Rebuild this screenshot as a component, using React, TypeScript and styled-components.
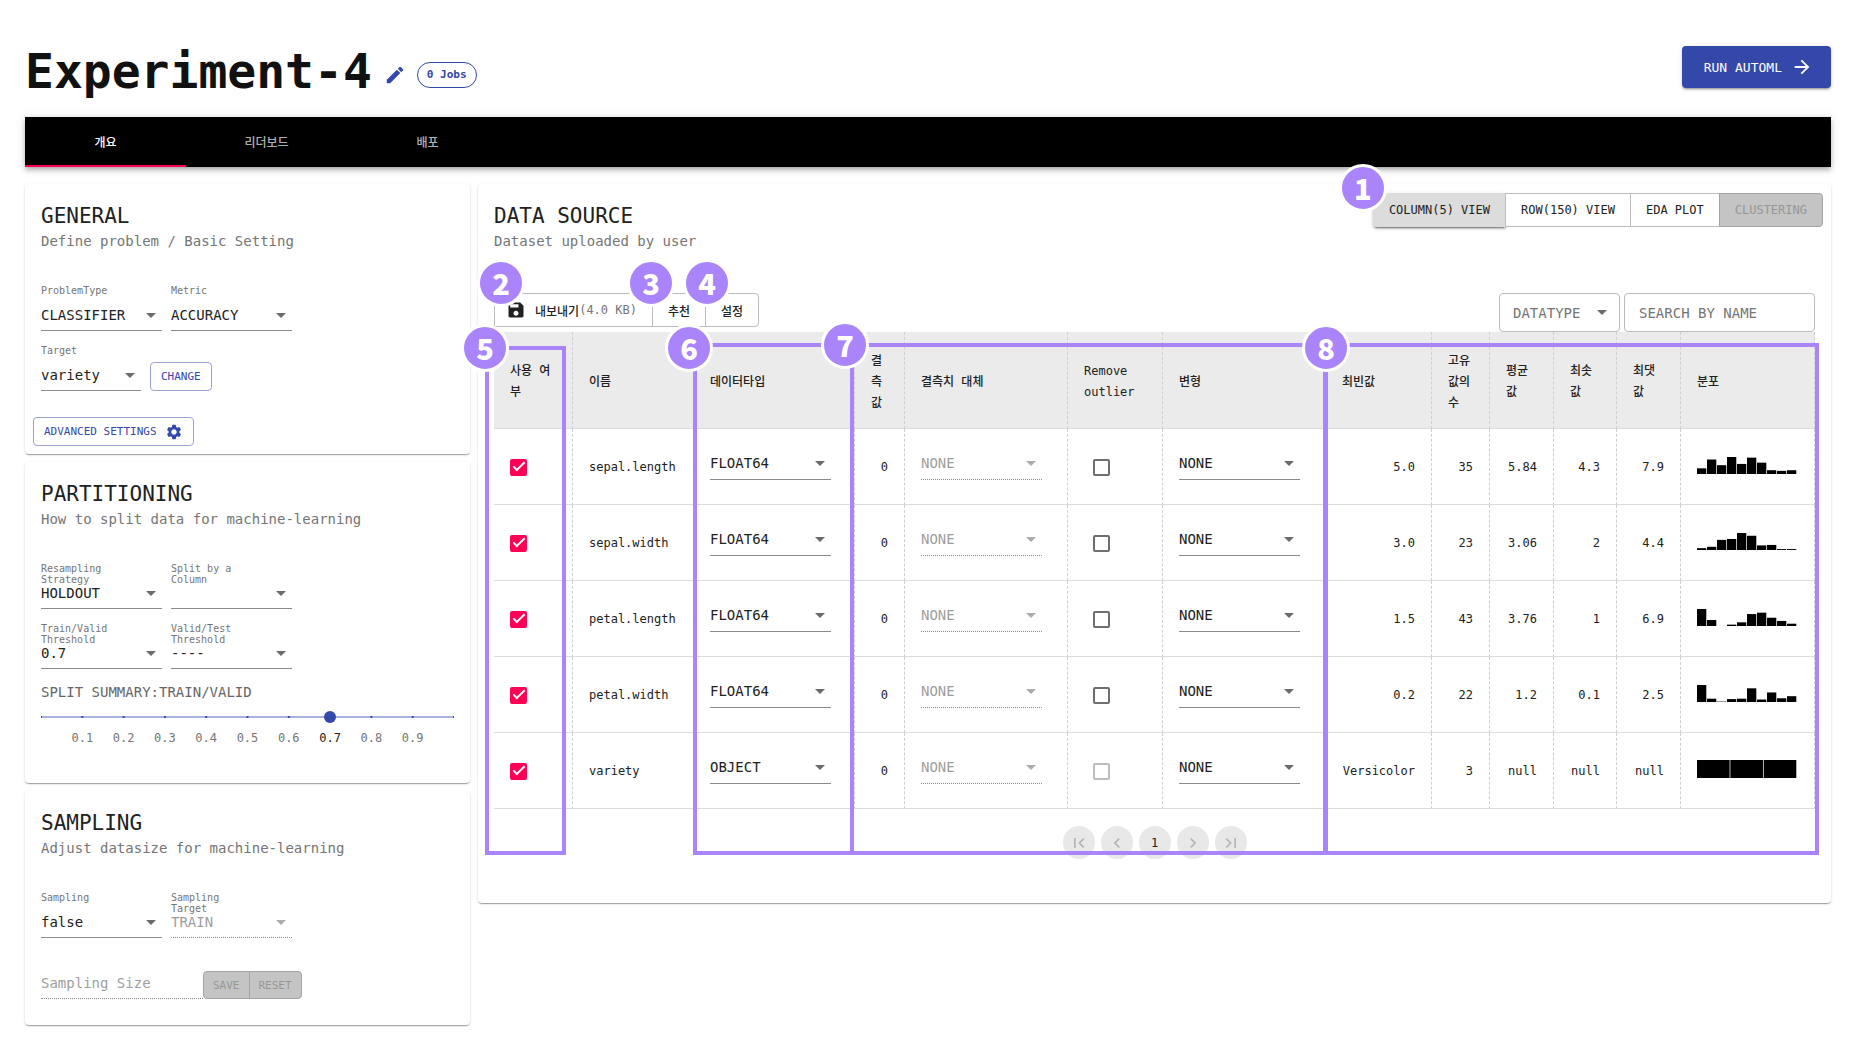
import React, { useId, useState } from "react";
import styled, { createGlobalStyle, css } from "styled-components";

const mono = `"DejaVu Sans Mono", "Liberation Mono", "Noto Sans CJK KR", monospace`;
const hangul = `"DejaVu Sans Mono", "Noto Sans CJK KR", sans-serif`;
const indigo = "#3448a9";
const violet = "#a984fb";
const pink = "#ff0054";
const ink = "#212121";
const muted = "#757575";
const faded = "#9e9e9e";

const Global = createGlobalStyle`
  *, *::before, *::after { box-sizing: border-box; }
  body { margin: 0; background: #fff; color: ${ink}; font-family: ${mono}; font-size: 14px; }
  button, input, select { font-family: inherit; margin: 0; }
`;

/* ---------- shell ---------- */

const Page = styled.main`
  padding: 37px 40px 15px 25px;
`;

const Header = styled.header`
  display: flex;
  align-items: center;
  height: 80px;
  padding-bottom: 12px;
`;

const Title = styled.h1`
  margin: 0;
  font-size: 48px;
  line-height: 68px;
  font-weight: 700;
  color: #111;
`;

const IconButton = styled.button`
  display: flex;
  margin: 8px 11px 0 12px;
  padding: 0;
  border: 0;
  background: none;
  color: ${indigo};
`;

const JobsChip = styled.span`
  height: 26px;
  margin-top: 8px;
  padding: 0 9px;
  border: 1px solid ${indigo};
  border-radius: 13px;
  color: ${indigo};
  font-size: 11px;
  line-height: 24px;
  font-weight: 700;
`;

const RunButton = styled.button`
  display: flex;
  align-items: center;
  gap: 9px;
  height: 42px;
  margin: 0 0 8px auto;
  padding: 0 18px 0 22px;
  border: 0;
  border-radius: 4px;
  background: ${indigo};
  color: #fff;
  font-size: 13px;
  box-shadow: 0 3px 1px -2px rgba(0, 0, 0, 0.2), 0 2px 2px rgba(0, 0, 0, 0.14), 0 1px 5px rgba(0, 0, 0, 0.12);
`;

const TabBar = styled.nav`
  display: flex;
  height: 50px;
  background: #000;
  box-shadow: 0 2px 4px -1px rgba(0, 0, 0, 0.2), 0 4px 5px rgba(0, 0, 0, 0.14), 0 1px 10px rgba(0, 0, 0, 0.12);
`;

const Tab = styled.button<{ $active?: boolean }>`
  width: 161px;
  padding: 0;
  border: 0;
  border-bottom: 2px solid ${(p) => (p.$active ? pink : "transparent")};
  background: none;
  color: ${(p) => (p.$active ? "#fff" : "rgba(255,255,255,.7)")};
  font-family: ${hangul};
  font-size: 12px;
  font-weight: 500;
`;

const Columns = styled.div`
  display: grid;
  grid-template-columns: minmax(0, 445fr) minmax(0, 1353fr);
  gap: 8px;
  align-items: start;
  margin-top: 17px;
`;

const Stack = styled.div`
  display: flex;
  flex-direction: column;
  gap: 8px;
`;

const Card = styled.section<{ $bottom: number }>`
  padding: 16px 16px ${(p) => p.$bottom}px;
  border-radius: 4px;
  background: #fff;
  box-shadow: 0 2px 1px -1px rgba(0, 0, 0, 0.2), 0 1px 1px rgba(0, 0, 0, 0.14), 0 1px 3px rgba(0, 0, 0, 0.12);
`;

const CardTitle = styled.h2`
  margin: 0;
  font-size: 21px;
  line-height: 32px;
  font-weight: 400;
`;

const CardText = styled.p`
  margin: 0;
  font-size: 14px;
  line-height: 18px;
  color: ${muted};
`;

/* ---------- form parts ---------- */

const Rows = styled.div`
  display: flex;
  flex-direction: column;
  gap: 14px;
  margin-top: 35px;
`;

const FieldRow = styled.div`
  display: flex;
  align-items: flex-end;
  gap: 9px;
`;

const FieldBox = styled.div<{ $width: number }>`
  width: ${(p) => p.$width}px;
`;

const FieldLabel = styled.label`
  display: block;
  width: 88px;
  height: 22px;
  font-size: 10px;
  line-height: 11px;
  color: ${muted};
`;

const SelectShell = styled.span<{ $off?: boolean }>`
  display: grid;
  align-items: center;
  width: 100%;
  height: 24px;
  padding-bottom: 7px;
  border-bottom: 1px ${(p) => (p.$off ? "dotted" : "solid")} #8a8a8a;
  color: ${(p) => (p.$off ? faded : ink)};

  &::after {
    content: "";
    grid-area: 1 / 1;
    justify-self: end;
    margin-right: 6px;
    border: 5px solid transparent;
    border-top-color: ${(p) => (p.$off ? "#ababab" : "#6b6b6b")};
    border-bottom-width: 0;
    pointer-events: none;
  }
`;

const NativeSelect = styled.select`
  grid-area: 1 / 1;
  width: 100%;
  height: 16px;
  padding: 0;
  border: 0;
  outline: 0;
  appearance: none;
  background: none;
  color: inherit;
  font-size: 14px;
  line-height: 16px;
  opacity: 1;
`;

const CellSelectShell = styled(SelectShell)`
  width: 121px;
  height: 26px;
`;

const OutlineButton = styled.button`
  display: inline-flex;
  align-items: center;
  gap: 8px;
  height: 29px;
  padding: 0 10px;
  border: 1px solid #9aa3d4;
  border-radius: 4px;
  background: #fff;
  color: ${indigo};
  font-size: 11px;
`;

const AdvancedRow = styled.div`
  display: flex;
  margin: 26px 0 0 -8px;
`;

const SplitLabel = styled.label`
  display: block;
  margin-top: 13px;
  font-size: 14px;
  line-height: 20px;
  color: #666;
`;

const Track = styled.div`
  height: 20px;
  margin-top: 5px;
  background: linear-gradient(90deg, transparent calc(100% - 2px), ${indigo} 0) 1px 9px / 10% 2px repeat-x,
    linear-gradient(#aab1dc, #aab1dc) 0 9px / 100% 2px no-repeat;
`;

const Range = styled.input`
  display: block;
  width: calc(100% + 12px);
  height: 20px;
  margin: 0 -6px;
  appearance: none;
  background: none;

  &::-webkit-slider-thumb {
    appearance: none;
    width: 12px;
    height: 12px;
    border-radius: 50%;
    background: ${indigo};
  }
`;

const Marks = styled.div`
  display: flex;
  padding: 0 5%;
  margin-top: 1px;
`;

const Mark = styled.span<{ $on: boolean }>`
  flex: 1;
  text-align: center;
  font-size: 12px;
  line-height: 20px;
  color: ${(p) => (p.$on ? ink : muted)};
`;

const SizeRow = styled.div`
  display: flex;
  margin-top: 33px;
`;

const SizeInput = styled.input`
  width: 162px;
  height: 28px;
  padding: 0 0 3px;
  border: 0;
  border-bottom: 1px dotted #8a8a8a;
  background: none;
  font-size: 14px;
  &::placeholder { color: ${faded}; opacity: 1; }
`;

/* ---------- button groups ---------- */

const Group = styled.div`
  position: relative;
  display: flex;
`;

const GroupButton = styled.button<{ $selected?: boolean; $small?: boolean }>`
  position: relative;
  display: flex;
  align-items: center;
  height: ${(p) => (p.$small ? 28 : 34)}px;
  padding: 0 ${(p) => (p.$small ? 9 : 15)}px;
  border: 1px solid #bcbcbc;
  background: #fff;
  color: ${ink};
  font-size: ${(p) => (p.$small ? 11 : 12)}px;

  & + & { margin-left: -1px; }
  &:first-of-type { border-radius: 4px 0 0 4px; }
  &:last-of-type { border-radius: 0 4px 4px 0; }

  &:disabled {
    border-color: #a3a3a3;
    background: #c4c4c4;
    color: #979797;
  }

  ${(p) =>
    p.$selected &&
    css`
      border-color: #dcdcdc #a8a8a8 #dcdcdc #dcdcdc;
      background: #dcdcdc;
      box-shadow: 0 3px 1px -2px rgba(0, 0, 0, 0.3), 0 2px 2px rgba(0, 0, 0, 0.2), 0 1px 5px rgba(0, 0, 0, 0.12);
    `}
`;

const Hangul = styled.span`
  font-family: ${hangul};
  font-size: 12px;
  font-weight: 500;
`;

const SizeNote = styled.span`
  color: ${muted};
`;

const SaveSlot = styled.span`
  display: flex;
  margin: 0 9px 0 -4px;
`;

/* ---------- data card ---------- */

const DataHead = styled.div`
  display: flex;
  justify-content: space-between;
  align-items: flex-start;
  height: 93px;
`;

const ViewSwitch = styled(Group)`
  margin: -7px -8px 0 0;
`;

const Toolbar = styled.div`
  display: flex;
  justify-content: space-between;
  align-items: flex-start;
  height: 39px;
`;

const Filters = styled.div`
  display: flex;
  gap: 4px;
`;

const TypeFilter = styled.span`
  display: grid;
  align-items: center;
  width: 121px;
  height: 39px;
  border: 1px solid #bcbcbc;
  border-radius: 4px;
  color: ${muted};

  ${NativeSelect} {
    height: 36px;
    padding-left: 13px;
  }

  &::after {
    content: "";
    grid-area: 1 / 1;
    justify-self: end;
    margin-right: 12px;
    border: 5px solid transparent;
    border-top-color: #6b6b6b;
    border-bottom-width: 0;
    pointer-events: none;
  }
`;

const Search = styled.input`
  width: 191px;
  height: 39px;
  padding: 0 14px;
  border: 1px solid #bcbcbc;
  border-radius: 4px;
  font-size: 14px;
  &::placeholder { color: ${muted}; opacity: 1; }
`;

const TableArea = styled.div`
  position: relative;
`;

const Table = styled.table`
  width: 100%;
  table-layout: fixed;
  border-collapse: separate;
  border-spacing: 0;
`;

const Th = styled.th<{ $latin?: boolean }>`
  height: 97px;
  padding: 4px 16px 0;
  border-right: 1px dashed #cfcfcf;
  border-bottom: 1px solid #dcdcdc;
  background: #ebebeb;
  text-align: left;
  word-break: ${(p) => (p.$latin ? "normal" : "break-all")};
  font-family: ${(p) => (p.$latin ? mono : hangul)};
  font-size: 12px;
  line-height: 21px;
  font-weight: 500;
`;

const Td = styled.td<{ $num?: boolean; $inset?: boolean }>`
  height: 76px;
  padding: 1px 16px 0 ${(p) => (p.$inset ? 25 : 16)}px;
  border-right: 1px dashed #cfcfcf;
  border-bottom: 1px solid #dcdcdc;
  font-size: 12px;
  line-height: 20px;
  text-align: ${(p) => (p.$num ? "right" : "left")};
  white-space: nowrap;
`;

const Check = styled.input`
  display: grid;
  place-items: center;
  width: 17px;
  height: 17px;
  appearance: none;
  border: 2px solid #6e6e6e;
  border-radius: 2px;
  background: #fff;

  &:checked {
    border-color: ${pink};
    background: ${pink};
  }
  &:checked::before {
    content: "";
    width: 12px;
    height: 6px;
    border: solid #fff;
    border-width: 0 0 2px 2px;
    transform: translateY(-2px) rotate(-45deg);
  }
  &:disabled { border-color: #bdbdbd; }
`;

const Histogram = styled.svg`
  display: block;
  width: 100px;
  height: 18px;
  margin-bottom: 4px;
`;

const Pager = styled.nav`
  display: flex;
  justify-content: center;
  gap: 6px;
  margin-top: 17px;
`;

const PageButton = styled.button`
  display: flex;
  align-items: center;
  justify-content: center;
  width: 32px;
  height: 33px;
  padding: 0;
  border: 0;
  border-radius: 50%;
  background: #e8e8e8;
  color: ${ink};
  font-size: 12px;
  &:disabled { color: #b5b5b5; }
`;

/* ---------- annotations ---------- */

const Badge = styled.span<{ $x: number; $y: number }>`
  position: absolute;
  z-index: 3;
  left: ${(p) => p.$x}px;
  top: ${(p) => p.$y}px;
  width: 48px;
  height: 48px;
  margin: -24px 0 0 -24px;
  border: 3px solid #fff;
  border-radius: 50%;
  background: ${violet};
  color: #fff;
  font-family: "Noto Sans CJK KR", sans-serif;
  font-size: 29px;
  line-height: 41px;
  font-weight: 900;
  text-align: center;
`;

const FrameLayer = styled.div<{ $columns: string }>`
  position: absolute;
  inset: 11px 0 -46px;
  display: grid;
  grid-template-columns: ${(p) => p.$columns};
  pointer-events: none;
`;

const Frame = styled.div<{ $from: number; $to: number; $margin: string }>`
  position: relative;
  grid-row: 1;
  grid-column: ${(p) => p.$from} / ${(p) => p.$to};
  margin: ${(p) => p.$margin};
  border: 4px solid ${violet};
`;

const Anchor = styled.span`
  position: relative;
  display: flex;
  & + & { margin-left: -1px; }
  &:not(:last-of-type) ${GroupButton} { border-top-right-radius: 0; border-bottom-right-radius: 0; }
  &:not(:first-of-type) ${GroupButton} { border-top-left-radius: 0; border-bottom-left-radius: 0; }
`;

/* ---------- icons ---------- */

const Icon = ({ d, size }: { d: string; size: number }) => (
  <svg width={size} height={size} viewBox="0 0 24 24" fill="currentColor" aria-hidden="true">
    <path d={d} />
  </svg>
);

const icons = {
  edit: "M3 17.25V21h3.75L17.81 9.94l-3.75-3.75L3 17.25zM20.71 7.04a1 1 0 0 0 0-1.41l-2.34-2.34a1 1 0 0 0-1.41 0l-1.83 1.83 3.75 3.75 1.83-1.83z",
  arrow: "M12 4l-1.41 1.41L16.17 11H4v2h12.17l-5.58 5.59L12 20l8-8z",
  gear: "M19.14 12.94c.04-.3.06-.61.06-.94 0-.32-.02-.64-.07-.94l2.03-1.58a.49.49 0 0 0 .12-.61l-1.92-3.32a.488.488 0 0 0-.59-.22l-2.39.96c-.5-.38-1.03-.7-1.62-.94l-.36-2.54a.484.484 0 0 0-.48-.41h-3.84c-.24 0-.43.17-.47.41l-.36 2.54c-.59.24-1.13.57-1.62.94l-2.39-.96c-.22-.08-.47 0-.59.22L2.74 8.87c-.12.21-.08.47.12.61l2.03 1.58c-.05.3-.09.63-.09.94s.02.64.07.94l-2.03 1.58a.49.49 0 0 0-.12.61l1.92 3.32c.12.22.37.29.59.22l2.39-.96c.5.38 1.03.7 1.62.94l.36 2.54c.05.24.24.41.48.41h3.84c.24 0 .44-.17.47-.41l.36-2.54c.59-.24 1.13-.56 1.62-.94l2.39.96c.22.08.47 0 .59-.22l1.92-3.32c.12-.22.07-.47-.12-.61l-2.01-1.58zM12 15.6c-1.98 0-3.6-1.62-3.6-3.6s1.62-3.6 3.6-3.6 3.6 1.62 3.6 3.6-1.62 3.6-3.6 3.6z",
  save: "M17 3H5a2 2 0 0 0-2 2v14a2 2 0 0 0 2 2h14c1.1 0 2-.9 2-2V7l-4-4zm-5 16c-1.66 0-3-1.34-3-3s1.34-3 3-3 3 1.34 3 3-1.34 3-3 3zm3-10H5V5h10v4z",
  first: "M18.41 16.59L13.82 12l4.59-4.59L17 6l-6 6 6 6zM6 6h2v12H6z",
  prev: "M15.41 7.41L14 6l-6 6 6 6 1.41-1.41L10.83 12z",
  next: "M10 6L8.59 7.41 13.17 12l-4.58 4.59L10 18l6-6z",
  last: "M5.59 7.41L10.18 12l-4.59 4.59L7 18l6-6-6-6zM16 6h2v12h-2z",
};

/* ---------- composed parts ---------- */

type FieldProps = { label: string; value: string; width?: number; disabled?: boolean };

function Field({ label, value, width = 121, disabled }: FieldProps) {
  const id = useId();
  return (
    <FieldBox $width={width}>
      <FieldLabel htmlFor={id}>{label}</FieldLabel>
      <SelectShell $off={disabled}>
        <NativeSelect id={id} disabled={disabled} defaultValue={value}>
          <option value={value}>{value}</option>
        </NativeSelect>
      </SelectShell>
    </FieldBox>
  );
}

function CellSelect({ label, value, disabled }: { label: string; value: string; disabled?: boolean }) {
  return (
    <CellSelectShell $off={disabled}>
      <NativeSelect aria-label={label} disabled={disabled} defaultValue={value}>
        <option value={value}>{value}</option>
      </NativeSelect>
    </CellSelectShell>
  );
}

function Bars({ counts }: { counts: number[] }) {
  const max = Math.max(...counts);
  const step = 100 / counts.length;
  const full = counts.length === 3 ? 18 : 17;
  return (
    <Histogram viewBox="0 0 100 18" aria-hidden="true">
      {counts.map((n, i) => (
        <rect key={i} x={i * step} y={18 - (n / max) * full} width={step - 0.7} height={(n / max) * full} />
      ))}
    </Histogram>
  );
}

/* ---------- data ---------- */

const columnWidths = [79, 121, 161, 50, 163, 95, 163, 106, 58, 64, 63, 64, 134];
const frameColumns = columnWidths.map((w) => `${w}fr`).join(" ");
const headers = ["사용 여부", "이름", "데이터타입", "결측값", "결측치 대체", "Remove outlier", "변형", "최빈값", "고유값의수", "평균값", "최솟값", "최댓값", "분포"];

const rows = [
  { name: "sepal.length", type: "FLOAT64", stats: ["5.0", "35", "5.84", "4.3", "7.9"], counts: [9, 23, 14, 27, 16, 26, 18, 6, 5, 6] },
  { name: "sepal.width", type: "FLOAT64", stats: ["3.0", "23", "3.06", "2", "4.4"], counts: [4, 7, 22, 24, 37, 31, 10, 11, 2, 2] },
  { name: "petal.length", type: "FLOAT64", stats: ["1.5", "43", "3.76", "1", "6.9"], counts: [37, 13, 0, 3, 8, 26, 29, 18, 11, 5] },
  { name: "petal.width", type: "FLOAT64", stats: ["0.2", "22", "1.2", "0.1", "2.5"], counts: [41, 8, 1, 7, 8, 33, 6, 23, 9, 14] },
  { name: "variety", type: "OBJECT", stats: ["Versicolor", "3", "null", "null", "null"], counts: [50, 50, 50] },
];

const splitMarks = [0.1, 0.2, 0.3, 0.4, 0.5, 0.6, 0.7, 0.8, 0.9];

export default function App() {
  const [split, setSplit] = useState(0.7);

  return (
    <Page>
      <Global />
      <Header>
        <Title>Experiment-4</Title>
        <IconButton aria-label="Edit name">
          <Icon d={icons.edit} size={22} />
        </IconButton>
        <JobsChip>0 Jobs</JobsChip>
        <RunButton>
          RUN AUTOML
          <Icon d={icons.arrow} size={22} />
        </RunButton>
      </Header>

      <TabBar>
        <Tab $active>개요</Tab>
        <Tab>리더보드</Tab>
        <Tab>배포</Tab>
      </TabBar>

      <Columns>
        <Stack>
          <Card $bottom={8}>
            <CardTitle>GENERAL</CardTitle>
            <CardText>Define problem / Basic Setting</CardText>
            <Rows>
              <FieldRow>
                <Field label="ProblemType" value="CLASSIFIER" />
                <Field label="Metric" value="ACCURACY" />
              </FieldRow>
              <FieldRow>
                <Field label="Target" value="variety" width={100} />
                <OutlineButton>CHANGE</OutlineButton>
              </FieldRow>
            </Rows>
            <AdvancedRow>
              <OutlineButton>
                ADVANCED SETTINGS
                <Icon d={icons.gear} size={18} />
              </OutlineButton>
            </AdvancedRow>
          </Card>

          <Card $bottom={35}>
            <CardTitle>PARTITIONING</CardTitle>
            <CardText>How to split data for machine-learning</CardText>
            <Rows>
              <FieldRow>
                <Field label="Resampling Strategy" value="HOLDOUT" />
                <Field label="Split by a Column" value="" />
              </FieldRow>
              <FieldRow>
                <Field label="Train/Valid Threshold" value="0.7" />
                <Field label="Valid/Test Threshold" value="----" />
              </FieldRow>
            </Rows>
            <SplitLabel htmlFor="split">SPLIT SUMMARY:TRAIN/VALID</SplitLabel>
            <Track>
              <Range
                id="split"
                type="range"
                min={0}
                max={1}
                step={0.1}
                value={split}
                onChange={(e) => setSplit(Number(e.target.value))}
              />
            </Track>
            <Marks>
              {splitMarks.map((m) => (
                <Mark key={m} $on={m === split}>
                  {m}
                </Mark>
              ))}
            </Marks>
          </Card>

          <Card $bottom={26}>
            <CardTitle>SAMPLING</CardTitle>
            <CardText>Adjust datasize for machine-learning</CardText>
            <Rows>
              <FieldRow>
                <Field label="Sampling" value="false" />
                <Field label="Sampling Target" value="TRAIN" disabled />
              </FieldRow>
            </Rows>
            <SizeRow>
              <SizeInput aria-label="Sampling Size" placeholder="Sampling Size" disabled />
              <Group>
                <GroupButton $small disabled>SAVE</GroupButton>
                <GroupButton $small disabled>RESET</GroupButton>
              </Group>
            </SizeRow>
          </Card>
        </Stack>

        <Card $bottom={44}>
          <DataHead>
            <div>
              <CardTitle>DATA SOURCE</CardTitle>
              <CardText>Dataset uploaded by user</CardText>
            </div>
            <ViewSwitch>
              <GroupButton $selected>COLUMN(5) VIEW</GroupButton>
              <GroupButton>ROW(150) VIEW</GroupButton>
              <GroupButton>EDA PLOT</GroupButton>
              <GroupButton disabled>CLUSTERING</GroupButton>
              <Badge $x={-10} $y={-5}>1</Badge>
            </ViewSwitch>
          </DataHead>

          <Toolbar>
            <Group>
              <Anchor>
                <GroupButton>
                  <SaveSlot>
                    <Icon d={icons.save} size={20} />
                  </SaveSlot>
                  <Hangul>내보내기</Hangul>
                  <SizeNote>(4.0 KB)</SizeNote>
                </GroupButton>
                <Badge $x={7} $y={-10}>2</Badge>
              </Anchor>
              <Anchor>
                <GroupButton>
                  <Hangul>추천</Hangul>
                </GroupButton>
                <Badge $x={-1} $y={-10}>3</Badge>
              </Anchor>
              <Anchor>
                <GroupButton>
                  <Hangul>설정</Hangul>
                </GroupButton>
                <Badge $x={2} $y={-10}>4</Badge>
              </Anchor>
            </Group>
            <Filters>
              <TypeFilter>
                <NativeSelect aria-label="Data type" defaultValue="DATATYPE">
                  <option value="DATATYPE">DATATYPE</option>
                </NativeSelect>
              </TypeFilter>
              <Search aria-label="Search by name" placeholder="SEARCH BY NAME" />
            </Filters>
          </Toolbar>

          <TableArea>
            <Table>
              <colgroup>
                {columnWidths.map((w, i) => (
                  <col key={i} style={{ width: w }} />
                ))}
              </colgroup>
              <thead>
                <tr>
                  {headers.map((h) => (
                    <Th key={h} scope="col" $latin={h === "Remove outlier"}>
                      {h}
                    </Th>
                  ))}
                </tr>
              </thead>
              <tbody>
                {rows.map((r) => (
                  <tr key={r.name}>
                    <Td>
                      <Check type="checkbox" aria-label={`Use ${r.name}`} defaultChecked />
                    </Td>
                    <Td>{r.name}</Td>
                    <Td>
                      <CellSelect label={`Data type of ${r.name}`} value={r.type} />
                    </Td>
                    <Td $num>0</Td>
                    <Td>
                      <CellSelect label={`Imputation of ${r.name}`} value="NONE" disabled />
                    </Td>
                    <Td $inset>
                      <Check type="checkbox" aria-label={`Remove outliers of ${r.name}`} disabled={r.type === "OBJECT"} />
                    </Td>
                    <Td>
                      <CellSelect label={`Transform of ${r.name}`} value="NONE" />
                    </Td>
                    {r.stats.map((s, i) => (
                      <Td key={i} $num>
                        {s}
                      </Td>
                    ))}
                    <Td>
                      <Bars counts={r.counts} />
                    </Td>
                  </tr>
                ))}
              </tbody>
            </Table>
            <FrameLayer $columns={frameColumns}>
              <Frame $from={1} $to={2} $margin="3px 7px 0 -9px">
                <Badge $x={-4} $y={-2}>5</Badge>
              </Frame>
              <Frame $from={3} $to={4} $margin="0 1px 0 -1px">
                <Badge $x={-8} $y={1}>6</Badge>
              </Frame>
              <Frame $from={4} $to={8} $margin="0 -2px 0 -5px">
                <Badge $x={-9} $y={-2}>7</Badge>
              </Frame>
              <Frame $from={8} $to={14} $margin="0 -4px 0 -3px">
                <Badge $x={-1} $y={1}>8</Badge>
              </Frame>
            </FrameLayer>
          </TableArea>

          <Pager aria-label="Pagination">
            <PageButton aria-label="First page" disabled>
              <Icon d={icons.first} size={20} />
            </PageButton>
            <PageButton aria-label="Previous page" disabled>
              <Icon d={icons.prev} size={20} />
            </PageButton>
            <PageButton>1</PageButton>
            <PageButton aria-label="Next page" disabled>
              <Icon d={icons.next} size={20} />
            </PageButton>
            <PageButton aria-label="Last page" disabled>
              <Icon d={icons.last} size={20} />
            </PageButton>
          </Pager>
        </Card>
      </Columns>
    </Page>
  );
}
